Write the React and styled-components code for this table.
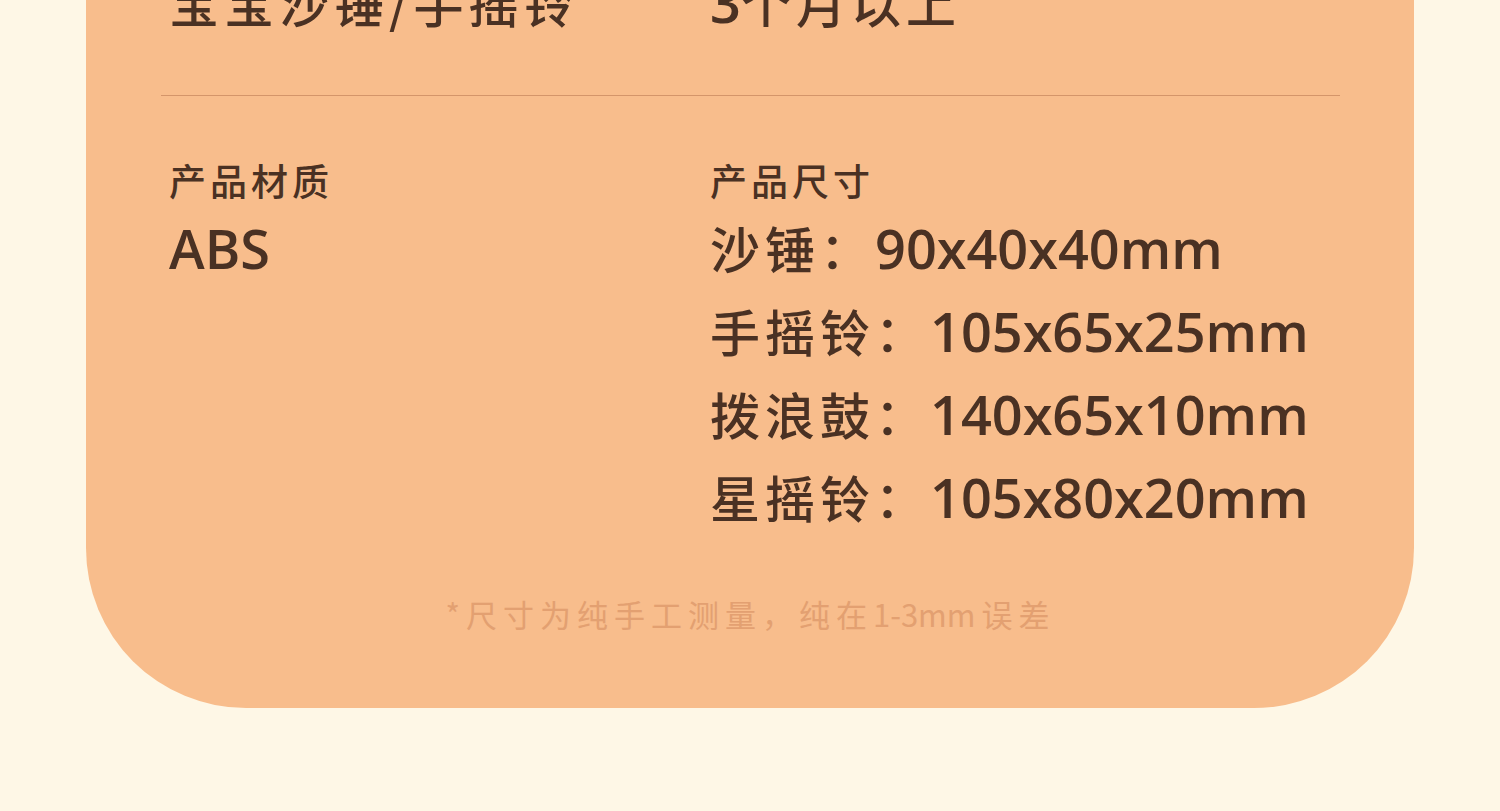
import React from 'react';
import styled, { createGlobalStyle } from "styled-components";

const Global = createGlobalStyle`
  body {
    margin: 0;
    background: #fef7e6;
    font-family: "Noto Sans CJK SC", "Noto Sans", sans-serif;
  }
`;

const Page = styled.div`
  display: flow-root;
  padding: 0 86px;
  height: 811px;
  overflow: hidden;
`;

const Card = styled.div`
  margin-top: -148px;
  background: #f8bd8c;
  border-radius: 0 0 160px 160px;
  padding: 60px 74px 74px 75px;
  color: #4a3123;
`;

const Row = styled.div`
  display: grid;
  grid-template-columns: 541px 1fr;
  padding-left: 8px;
`;

const Divider = styled.div`
  height: 1px;
  background: #d4956a;
  margin: 52px 0 62px;
`;

const Label = styled.div`
  font-size: 37px;
  line-height: 44px;
  font-weight: 500;
  letter-spacing: 4px;
  margin-bottom: 4px;
`;

const Value = styled.div`
  font-size: 50px;
  line-height: 82px;
  font-weight: 500;
  white-space: nowrap;
  letter-spacing: 5px;
`;

const Num = styled.span`
  font-family: "Open Sans", sans-serif;
  font-size: 54px;
  letter-spacing: 0;
  font-weight: 600;
`;

const Note = styled.p`
  margin: 56px 0 0;
  text-align: center;
  font-size: 31px;
  line-height: 40px;
  letter-spacing: 6px;
  color: #e3a071;

  & span {
    letter-spacing: 0;
    margin-right: 6px;
  }
`;

const sizes = [
    { name: '沙锤：', size: '90x40x40mm' },
    { name: '手摇铃：', size: '105x65x25mm' },
    { name: '拨浪鼓：', size: '140x65x10mm' },
    { name: '星摇铃：', size: '105x80x20mm' },
];

export default function App() {
    return (
        <Page>
            <Global />
            <Card>
                <Row>
                    <div>
                        <Label>产品名称</Label>
                        <Value>宝宝沙锤/手摇铃</Value>
                    </div>
                    <div>
                        <Label>适用年龄</Label>
                        <Value><Num>3</Num>个月以上</Value>
                    </div>
                </Row>
                <Divider />
                <Row>
                    <div>
                        <Label>产品材质</Label>
                        <Value><Num>ABS</Num></Value>
                    </div>
                    <div>
                        <Label>产品尺寸</Label>
                        {
                            sizes.map((s, key) =>
                                <Value key={key}>{s.name}<Num>{s.size}</Num></Value>
                            )
                        }
                    </div>
                </Row>
                <Note>*尺寸为纯手工测量，纯在<span>1-3mm</span>误差</Note>
            </Card>
        </Page>
    )
}
